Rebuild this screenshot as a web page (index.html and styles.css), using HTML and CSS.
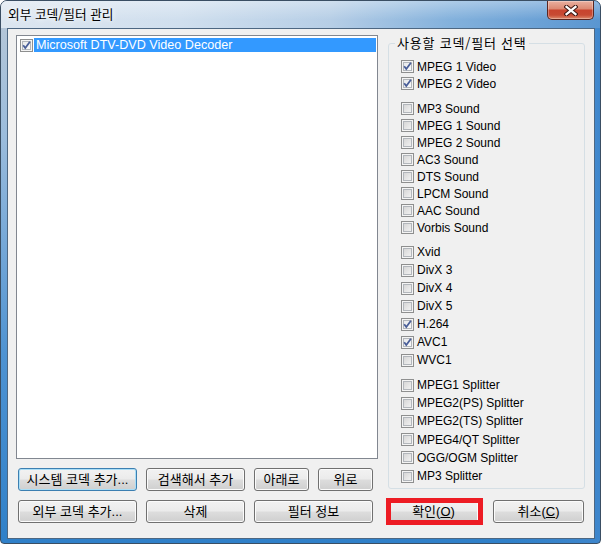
FILE: index.html
```html
<!DOCTYPE html>
<html lang="ko">
<head>
<meta charset="utf-8">
<title>외부 코덱/필터 관리</title>
<link rel="stylesheet" href="styles.css">
</head>
<body>
<div class="window">
  <div class="titlebar">
    <span class="title">외부 코덱/필터 관리</span>
    <div class="close">
      <svg width="14" height="11" viewBox="0 0 14 11">
        <path d="M2.5 1.8 L11.5 9.2 M11.5 1.8 L2.5 9.2" stroke="#3b1712" stroke-width="4.2" stroke-linecap="square" fill="none"/>
        <path d="M2.5 1.8 L11.5 9.2 M11.5 1.8 L2.5 9.2" stroke="#ffffff" stroke-width="2.2" stroke-linecap="square" fill="none"/>
      </svg>
    </div>
  </div>
  <div class="client">
    <div class="top">
      <div class="leftcol">
        <div class="listbox">
          <div class="item">
            <span class="cb on"><svg width="11" height="11" viewBox="0 0 11 11"><path d="M2.2 5.2 L4.3 8 L8.9 1.8" stroke="#4a5f99" stroke-width="1.8" fill="none"/></svg></span>
            <span class="item-label">Microsoft DTV-DVD Video Decoder</span>
          </div>
        </div>
        <div class="btnrow">
          <button class="btn default w119">시스템 코덱 추가...</button>
          <button class="btn w99">검색해서 추가</button>
          <button class="btn w55">아래로</button>
          <button class="btn w55">위로</button>
        </div>
      </div>
      <fieldset class="group">
        <legend>사용할 코덱/필터 선택</legend>
        <div class="sec r17">
          <div class="row"><span class="cb on"><svg width="11" height="11" viewBox="0 0 11 11"><path d="M2.2 5.2 L4.3 8 L8.9 1.8" stroke="#4a5f99" stroke-width="1.8" fill="none"/></svg></span>MPEG 1 Video</div>
          <div class="row"><span class="cb on"><svg width="11" height="11" viewBox="0 0 11 11"><path d="M2.2 5.2 L4.3 8 L8.9 1.8" stroke="#4a5f99" stroke-width="1.8" fill="none"/></svg></span>MPEG 2 Video</div>
        </div>
        <div class="sec r17 s2">
          <div class="row"><span class="cb"></span>MP3 Sound</div>
          <div class="row"><span class="cb"></span>MPEG 1 Sound</div>
          <div class="row"><span class="cb"></span>MPEG 2 Sound</div>
          <div class="row"><span class="cb"></span>AC3 Sound</div>
          <div class="row"><span class="cb"></span>DTS Sound</div>
          <div class="row"><span class="cb"></span>LPCM Sound</div>
          <div class="row"><span class="cb"></span>AAC Sound</div>
          <div class="row"><span class="cb"></span>Vorbis Sound</div>
        </div>
        <div class="sec r18">
          <div class="row"><span class="cb"></span>Xvid</div>
          <div class="row"><span class="cb"></span>DivX 3</div>
          <div class="row"><span class="cb"></span>DivX 4</div>
          <div class="row"><span class="cb"></span>DivX 5</div>
          <div class="row"><span class="cb on"><svg width="11" height="11" viewBox="0 0 11 11"><path d="M2.2 5.2 L4.3 8 L8.9 1.8" stroke="#4a5f99" stroke-width="1.8" fill="none"/></svg></span>H.264</div>
          <div class="row"><span class="cb on"><svg width="11" height="11" viewBox="0 0 11 11"><path d="M2.2 5.2 L4.3 8 L8.9 1.8" stroke="#4a5f99" stroke-width="1.8" fill="none"/></svg></span>AVC1</div>
          <div class="row"><span class="cb"></span>WVC1</div>
        </div>
        <div class="sec r18b">
          <div class="row"><span class="cb"></span>MPEG1 Splitter</div>
          <div class="row"><span class="cb"></span>MPEG2(PS) Splitter</div>
          <div class="row"><span class="cb"></span>MPEG2(TS) Splitter</div>
          <div class="row"><span class="cb"></span>MPEG4/QT Splitter</div>
          <div class="row"><span class="cb"></span>OGG/OGM Splitter</div>
          <div class="row"><span class="cb"></span>MP3 Splitter</div>
        </div>
      </fieldset>
    </div>
    <div class="bottom">
      <div class="btnrow flat">
        <button class="btn w119">외부 코덱 추가...</button>
        <button class="btn w99">삭제</button>
        <button class="btn w119">필터 정보</button>
      </div>
      <div class="okwrap">
        <button class="btn w91">확인(<u>O</u>)</button>
      </div>
      <button class="btn w91 cancel">취소(<u>C</u>)</button>
    </div>
  </div>
</div>
</body>
</html>
```

FILE: styles.css
```css
html, body {
  margin: 0;
  padding: 0;
}
body {
  width: 601px;
  height: 544px;
  overflow: hidden;
  background: #ffffff;
  font: 12px/14px "Liberation Sans", "Noto Sans CJK KR", sans-serif;
  color: #000;
}
.window {
  box-sizing: border-box;
  width: 601px;
  height: 544px;
  border: 1px solid #3a4e63;
  border-radius: 7px 7px 4px 4px;
  overflow: hidden;
  display: flex;
  flex-direction: column;
  background:
    linear-gradient(to right, rgba(62,134,204,0) 0%, rgba(62,134,204,0) 85%, rgba(62,134,204,1) 100%),
    linear-gradient(180deg, #b9c8d7 0%, #9bbcdc 25%, #4f93d2 65%, #2f80c9 100%);
}
.titlebar {
  height: 27px;
  flex: none;
  display: flex;
  align-items: flex-start;
  background:
    linear-gradient(to bottom, rgba(255,255,255,0.35) 0%, rgba(255,255,255,0) 70%),
    linear-gradient(to right, #dce6f0 0%, #d0dfee 30%, #b6cee6 55%, #83b1dc 75%, #5a96d1 100%);
}
.title {
  margin: 4px 0 0 7px;
  font: 12.7px/18px "Noto Sans CJK KR", sans-serif;
  color: #000;
  text-shadow: 0 0 5px #ffffff, 0 0 9px rgba(255,255,255,0.9);
}
.close {
  margin: 0 6px 0 auto;
  width: 47px;
  height: 19px;
  box-sizing: border-box;
  border: 1px solid #5b2620;
  border-top: none;
  border-radius: 0 0 5px 5px;
  background: linear-gradient(180deg, #e9b0a0 0%, #dc8a74 42%, #c8442e 52%, #c74a33 78%, #dd8a6c 100%);
  box-shadow: inset 0 0 0 1px rgba(255,255,255,0.3);
  display: flex;
  align-items: center;
  justify-content: center;
}
.close svg { display: block; margin-top: 1px; }
.client {
  flex: 1;
  margin: 0 5px 4px 6px;
  border: 1px solid #4d6782;
  background: #f0f0f0;
  display: flex;
  flex-direction: column;
  padding: 6px 9px 0 8px;
}
.top {
  display: flex;
  align-items: flex-start;
}
.leftcol {
  width: 362px;
  display: flex;
  flex-direction: column;
}
.listbox {
  box-sizing: border-box;
  height: 424px;
  border: 1px solid #828790;
  background: #ffffff;
  padding: 2px 1px 0 3px;
}
.item {
  display: flex;
  align-items: center;
  height: 14px;
}
.item-label {
  flex: 1;
  margin-left: 1px;
  padding-left: 2px;
  height: 14px;
  font-size: 12.6px;
  line-height: 14px;
  background: #3399ff;
  color: #ffffff;
  white-space: nowrap;
}
.cb {
  flex: none;
  box-sizing: border-box;
  width: 13px;
  height: 13px;
  border: 1px solid #8e8f8f;
  background: linear-gradient(135deg, #cfcfcf 0%, #e8e8e8 60%, #f6f6f6 100%);
  box-shadow: inset 0 0 0 1px #f4f4f4, inset 0 0 0 2px #b2b6bb;
  display: flex;
}
.cb.on {
  background: linear-gradient(135deg, #e2e4e8 0%, #f4f4f4 60%, #ffffff 100%);
}
.cb svg { display: block; }
.btnrow {
  display: flex;
  gap: 9px;
  margin-top: 9px;
  padding-left: 2px;
}
.btnrow.flat { margin-top: 0; }
.btn {
  box-sizing: border-box;
  height: 23px;
  padding: 0;
  border: 1px solid #707070;
  border-radius: 3px;
  background: linear-gradient(180deg, #f2f2f2 0%, #ebebeb 49%, #dddddd 51%, #cfcfcf 100%);
  box-shadow: inset 0 0 0 1px #fbfbfb;
  font: 13px/21px "Liberation Sans", "Noto Sans CJK KR", sans-serif;
  color: #000;
  text-align: center;
  white-space: nowrap;
}
.btn u { text-decoration: underline; text-underline-offset: 1px; }
.btn.default {
  border-color: #3c7fb1;
  box-shadow: inset 0 0 0 1px #a9def7;
}
.w119 { width: 119px; }
.w99 { width: 99px; }
.w55 { width: 55px; }
.w91 { width: 91px; }
.group {
  box-sizing: border-box;
  margin: 1px 0 0 10px;
  width: 197px;
  height: 453px;
  border: 1px solid #d5dfe5;
  border-radius: 3px;
  padding: 8px 0 0 12px;
  min-width: 0;
}
.group legend {
  padding: 0 2px;
  margin-left: -6px;
  font: 13px/14px "Noto Sans CJK KR", sans-serif;
  letter-spacing: 0.8px;
  color: #000;
}
.sec + .sec { margin-top: 7px; }
.sec + .sec.s2 { margin-top: 8px; }
.row {
  display: flex;
  align-items: center;
  gap: 3px;
  white-space: nowrap;
}
.r17 .row { height: 17px; }
.r18 .row { height: 18px; }
.r18b .row { height: 18.2px; }
.bottom {
  display: flex;
  margin-top: 9px;
}
.okwrap {
  position: relative;
  margin-left: 15px;
}
.okwrap::after {
  content: "";
  position: absolute;
  left: -2px;
  top: -2px;
  right: -4px;
  bottom: -2px;
  border: 5px solid #ed1c24;
}
.okwrap .btn { display: block; }
.cancel { margin-left: 14px; }
```
